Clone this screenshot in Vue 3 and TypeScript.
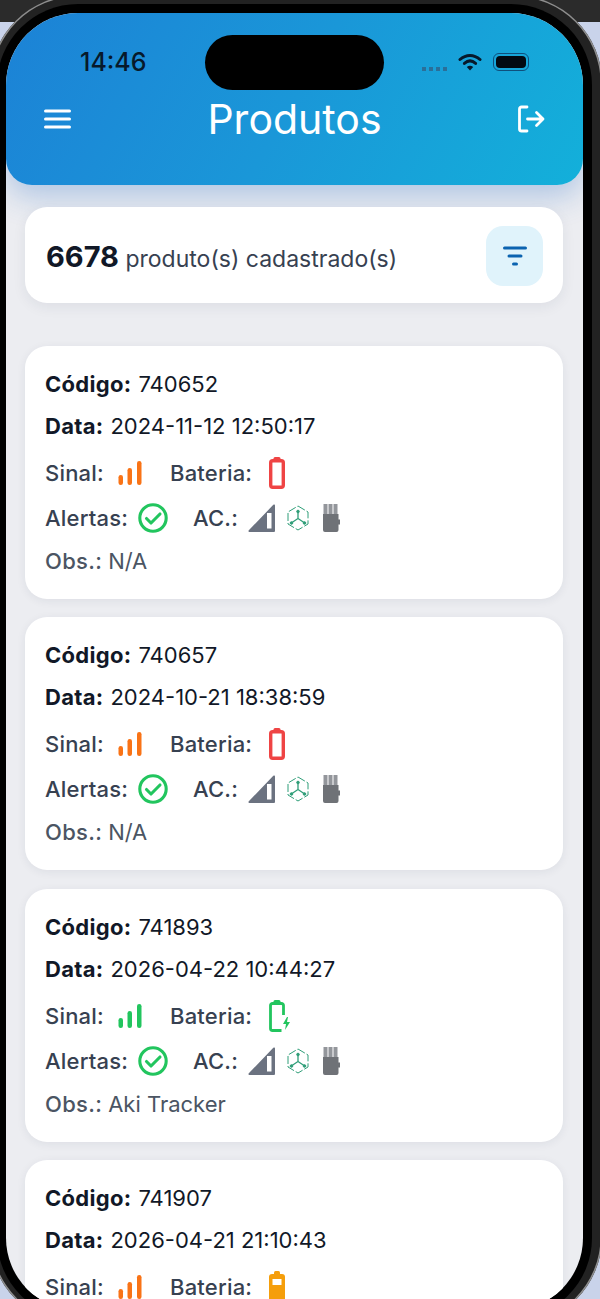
<script setup lang="ts">
type SignalLevel = 'orange' | 'green'
type BatteryKind = 'low' | 'charging' | 'mid'

interface Product {
  code: string
  date: string
  signal: SignalLevel
  battery: BatteryKind
  obs: string
}

const products: Product[] = [
  { code: '740652', date: '2024-11-12 12:50:17', signal: 'orange', battery: 'low', obs: 'N/A' },
  { code: '740657', date: '2024-10-21 18:38:59', signal: 'orange', battery: 'low', obs: 'N/A' },
  { code: '741893', date: '2026-04-22 10:44:27', signal: 'green', battery: 'charging', obs: 'Aki Tracker' },
  { code: '741907', date: '2026-04-21 21:10:43', signal: 'orange', battery: 'mid', obs: 'N/A' }
]
</script>

<template>
  <div class="stage">
    <div class="phone">
      <div class="screen">
        <div class="island"></div>

        <header class="header">
          <div class="status">
            <span class="time">14:46</span>
            <div class="status-icons">
              <span class="dots"><i></i><i></i><i></i><i></i></span>
              <svg class="wifi" viewBox="0 0 24 18" fill="none" stroke="#07192b" stroke-width="3" stroke-linecap="round">
                <path d="M2 6.5C8 1 16 1 22 6.5" />
                <path d="M6.4 10.4C10 7.2 14 7.2 17.6 10.4" />
                <path d="M12 17.6L8.8 14C10.8 12.4 13.2 12.4 15.2 14Z" fill="#07192b" stroke="none" />
              </svg>
              <span class="cell"><span class="cell-fill"></span></span>
            </div>
          </div>
          <div class="topbar">
            <svg class="menu" viewBox="0 0 27 20" fill="none" stroke="#fff" stroke-width="3" stroke-linecap="round">
              <path d="M1.5 2h24M1.5 10h24M1.5 18h24" />
            </svg>
            <h1 class="title">Produtos</h1>
            <svg class="logout" viewBox="0 0 27 28" fill="none" stroke="#fff" stroke-width="2.8" stroke-linecap="round" stroke-linejoin="round">
              <path d="M9 2H3.5C2.4 2 1.5 2.9 1.5 4v20c0 1.1.9 2 2 2H9" />
              <path d="M9.5 14h15.5M18.5 7.5L25 14l-6.5 6.5" />
            </svg>
          </div>
        </header>

        <main class="content">
          <section class="summary">
            <p class="total"><strong>6678</strong> produto(s) cadastrado(s)</p>
            <button class="filter" type="button">
              <svg viewBox="0 0 24 20" fill="none" stroke="#0b63b0" stroke-width="3" stroke-linecap="round">
                <path d="M1.5 2h21M6 10h12M10.5 18h3" />
              </svg>
            </button>
          </section>

          <article v-for="p in products" :key="p.code" class="card">
            <div class="row strong"><b>Código:</b><span>{{ p.code }}</span></div>
            <div class="row strong"><b>Data:</b><span>{{ p.date }}</span></div>

            <div class="row tall">
              <span class="label w-sinal">Sinal:</span>
              <svg class="bars" :class="p.signal" viewBox="0 0 24 24" fill="currentColor">
                <rect x="0.5" y="14" width="4.5" height="10" rx="2.2" />
                <rect x="9.5" y="7" width="4.5" height="17" rx="2.2" />
                <rect x="19" y="0" width="4.5" height="24" rx="2.2" />
              </svg>
              <span class="label w-bat">Bateria:</span>
              <svg v-if="p.battery === 'low'" class="batt" viewBox="0 0 16 32" fill="none">
                <rect x="4.5" y="0" width="7" height="5" rx="1.5" fill="#ef4444" />
                <rect x="1.7" y="3.7" width="12.6" height="26.6" rx="2" stroke="#ef4444" stroke-width="3.4" />
              </svg>
              <svg v-else-if="p.battery === 'charging'" class="batt" viewBox="0 0 22 32" fill="none">
                <rect x="4.5" y="0" width="7" height="5" rx="1.5" fill="#22c55e" />
                <path d="M14.5 15V5.5a2 2 0 0 0-2-2h-9a2 2 0 0 0-2 2v23a2 2 0 0 0 2 2h9" stroke="#22c55e" stroke-width="2.8" />
                <path d="M18 17l-4 7h3l-1 6 5-8h-3l1-5z" fill="#22c55e" />
              </svg>
              <svg v-else class="batt" viewBox="0 0 16 32" fill="none">
                <rect x="5" y="0" width="6" height="5" rx="1.5" fill="#f59e0b" />
                <rect x="0" y="3" width="16" height="29" rx="3" fill="#f59e0b" />
                <rect x="3.5" y="8" width="9" height="6" fill="#fff" />
              </svg>
            </div>

            <div class="row mid">
              <span class="label w-alert">Alertas:</span>
              <svg class="check" viewBox="0 0 30 30" fill="none" stroke="#22c55e" stroke-width="3.1" stroke-linecap="round" stroke-linejoin="round">
                <circle cx="15" cy="15" r="13.2" />
                <path d="M8.5 15.5l4.5 4.5 9-9" />
              </svg>
              <span class="label w-ac">AC.:</span>
              <svg class="tri" viewBox="0 0 28 28">
                <path d="M27 1.5V27a1 1 0 0 1-1 1H1.5a1 1 0 0 1-.7-1.7L25.3.8A1 1 0 0 1 27 1.5z" fill="#6b7280" />
                <rect x="19" y="9" width="4.5" height="15.5" fill="#fff" />
              </svg>
              <svg class="net" viewBox="0 0 24 26" fill="none" stroke="#2f9e78" stroke-width="1">
                <path d="M12 1l10 6v12l-10 6-10-6V7z" stroke-dasharray="8 2" />
                <path d="M12 7v6.5M12 13.5l-6 4M12 13.5l6 4" stroke-width="1.3" />
                <circle cx="12" cy="6.5" r="1.3" fill="#2f9e78" />
                <circle cx="5.5" cy="18" r="1.3" fill="#2f9e78" />
                <circle cx="18.5" cy="18" r="1.3" fill="#2f9e78" />
              </svg>
              <svg class="chip" viewBox="0 0 18 28" fill="#6f7277">
                <rect x="1.5" y="0" width="4" height="11" fill="#93969b" />
                <rect x="6.5" y="0" width="4" height="11" fill="#93969b" />
                <rect x="11.5" y="0" width="4" height="11" fill="#93969b" />
                <path d="M1 10h15.500v5.500H18v5h-1.500V26a2 2 0 0 1-2 2H3a2 2 0 0 1-2-2z" />
              </svg>
            </div>

            <div class="row obs"><b>Obs.:</b><span>{{ p.obs }}</span></div>
          </article>
        </main>
      </div>
    </div>
  </div>
</template>

<style>
html,
body {
  margin: 0;
  background: #000;
}
</style>

<style scoped>
.stage {
  width: 600px;
  height: 1299px;
  overflow: hidden;
  background: linear-gradient(#2b2b2b 22px, #c9d3ea 22px);
  font-family: Inter, "Liberation Sans", sans-serif;
}

/* phone body, sticks out of the shot on the sides */
.phone {
  margin: -5px -2px 0 -10px;
  width: 612px;
  height: 1330px;
  box-sizing: border-box;
  padding: 18px 19px 0 16px;
  border-radius: 88px;
  background: #222;
  box-shadow: inset 0 0 0 1.5px #8d8d8d;
}

.screen {
  position: relative;
  width: 577px;
  height: 1297px;
  overflow: hidden;
  border-radius: 72px;
  background: #ecedf1;
  box-shadow: 0 0 0 9px #000;
}

.island {
  position: absolute;
  left: 199px;
  top: 22px;
  width: 179px;
  height: 55px;
  border-radius: 28px;
  background: #000;
}

.header {
  height: 172px;
  box-sizing: border-box;
  padding: 0 38px;
  border-radius: 0 0 26px 26px;
  background: linear-gradient(120deg, #1c82d6 0%, #1a97d8 50%, #13b0da 100%);
  box-shadow: 0 12px 30px rgba(40, 110, 200, 0.3);
}

.status {
  display: flex;
  align-items: center;
  justify-content: space-between;
  height: 50px;
  padding-top: 24px;
  padding-left: 36px;
}

.time {
  font-size: 25px;
  font-weight: 500;
  color: #07192b;
}

.status-icons {
  display: flex;
  align-items: center;
  gap: 11px;
  margin-right: 16px;
}

.dots {
  display: flex;
  gap: 3px;
  margin-top: 14px;
}

.dots i {
  width: 4px;
  height: 4px;
  background: #2a6f99;
}

.wifi {
  width: 24px;
  height: 18px;
}

.cell {
  display: flex;
  box-sizing: border-box;
  width: 36px;
  height: 18px;
  padding: 2px;
  border: 1px solid #0f4f7c;
  border-radius: 6px;
}

.cell-fill {
  flex: 1;
  border-radius: 4px;
  background: #020a12;
}

.topbar {
  display: flex;
  align-items: center;
  justify-content: space-between;
  height: 70px;
  margin-top: -3px;
}

.menu {
  width: 27px;
  height: 20px;
}

.title {
  margin: 0;
  font-size: 41px;
  font-weight: 400;
  color: #fff;
}

.logout {
  width: 27px;
  height: 28px;
}

.content {
  display: flex;
  flex-direction: column;
  gap: 18.5px;
  padding: 22px 20px 0 19px;
}

.summary {
  display: flex;
  align-items: center;
  justify-content: space-between;
  height: 96px;
  box-sizing: border-box;
  margin-bottom: 24px;
  padding: 0 20px 0 21px;
  border-radius: 22px;
  background: #fff;
  box-shadow: 0 4px 14px rgba(30, 40, 70, 0.07);
}

.total {
  margin: 2px 0 0;
  font-size: 23px;
  color: #374151;
}

.total strong {
  font-size: 29px;
  font-weight: 700;
  color: #111827;
}

.filter {
  display: flex;
  align-items: center;
  justify-content: center;
  width: 57px;
  height: 60px;
  margin-top: 2px;
  padding: 0;
  border: 0;
  border-radius: 17px;
  background: #e0f3fb;
}

.filter svg {
  width: 24px;
  height: 20px;
}

.card {
  height: 253px;
  box-sizing: border-box;
  padding: 20px 20px 0;
  border-radius: 22px;
  background: #fff;
  box-shadow: 0 2px 10px rgba(30, 40, 70, 0.07);
  font-size: 22px;
}

.row {
  display: flex;
  align-items: center;
  white-space: pre;
  color: #1f2937;
}

.strong {
  gap: 7px;
  height: 36px;
  margin-bottom: 6px;
  color: #111827;
}

.strong b {
  font-weight: 700;
  letter-spacing: 0.3px;
}

.tall {
  height: 46px;
}

.mid {
  height: 44px;
}

.label {
  flex: none;
  font-weight: 500;
  letter-spacing: 0.2px;
  color: #374151;
}

.w-sinal {
  width: 73px;
}

.w-bat {
  width: 99px;
  margin-left: 28px;
}

.w-alert {
  width: 93px;
}

.w-ac {
  width: 55px;
  margin-left: 25px;
}

.bars {
  flex: none;
  width: 24px;
  height: 24px;
}

.bars.orange {
  color: #f97316;
}

.bars.green {
  color: #22c55e;
}

.batt {
  flex: none;
  height: 32px;
  width: auto;
}

.check {
  flex: none;
  width: 30px;
  height: 30px;
}

.tri {
  flex: none;
  width: 28px;
  height: 28px;
}

.net {
  flex: none;
  width: 24px;
  height: 26px;
  margin-left: 10px;
}

.chip {
  flex: none;
  width: 18px;
  height: 28px;
  margin-left: 12px;
}

.obs {
  gap: 6px;
  height: 42px;
  color: #4b5563;
}

.obs b {
  font-weight: 500;
  letter-spacing: 0.3px;
}
</style>
